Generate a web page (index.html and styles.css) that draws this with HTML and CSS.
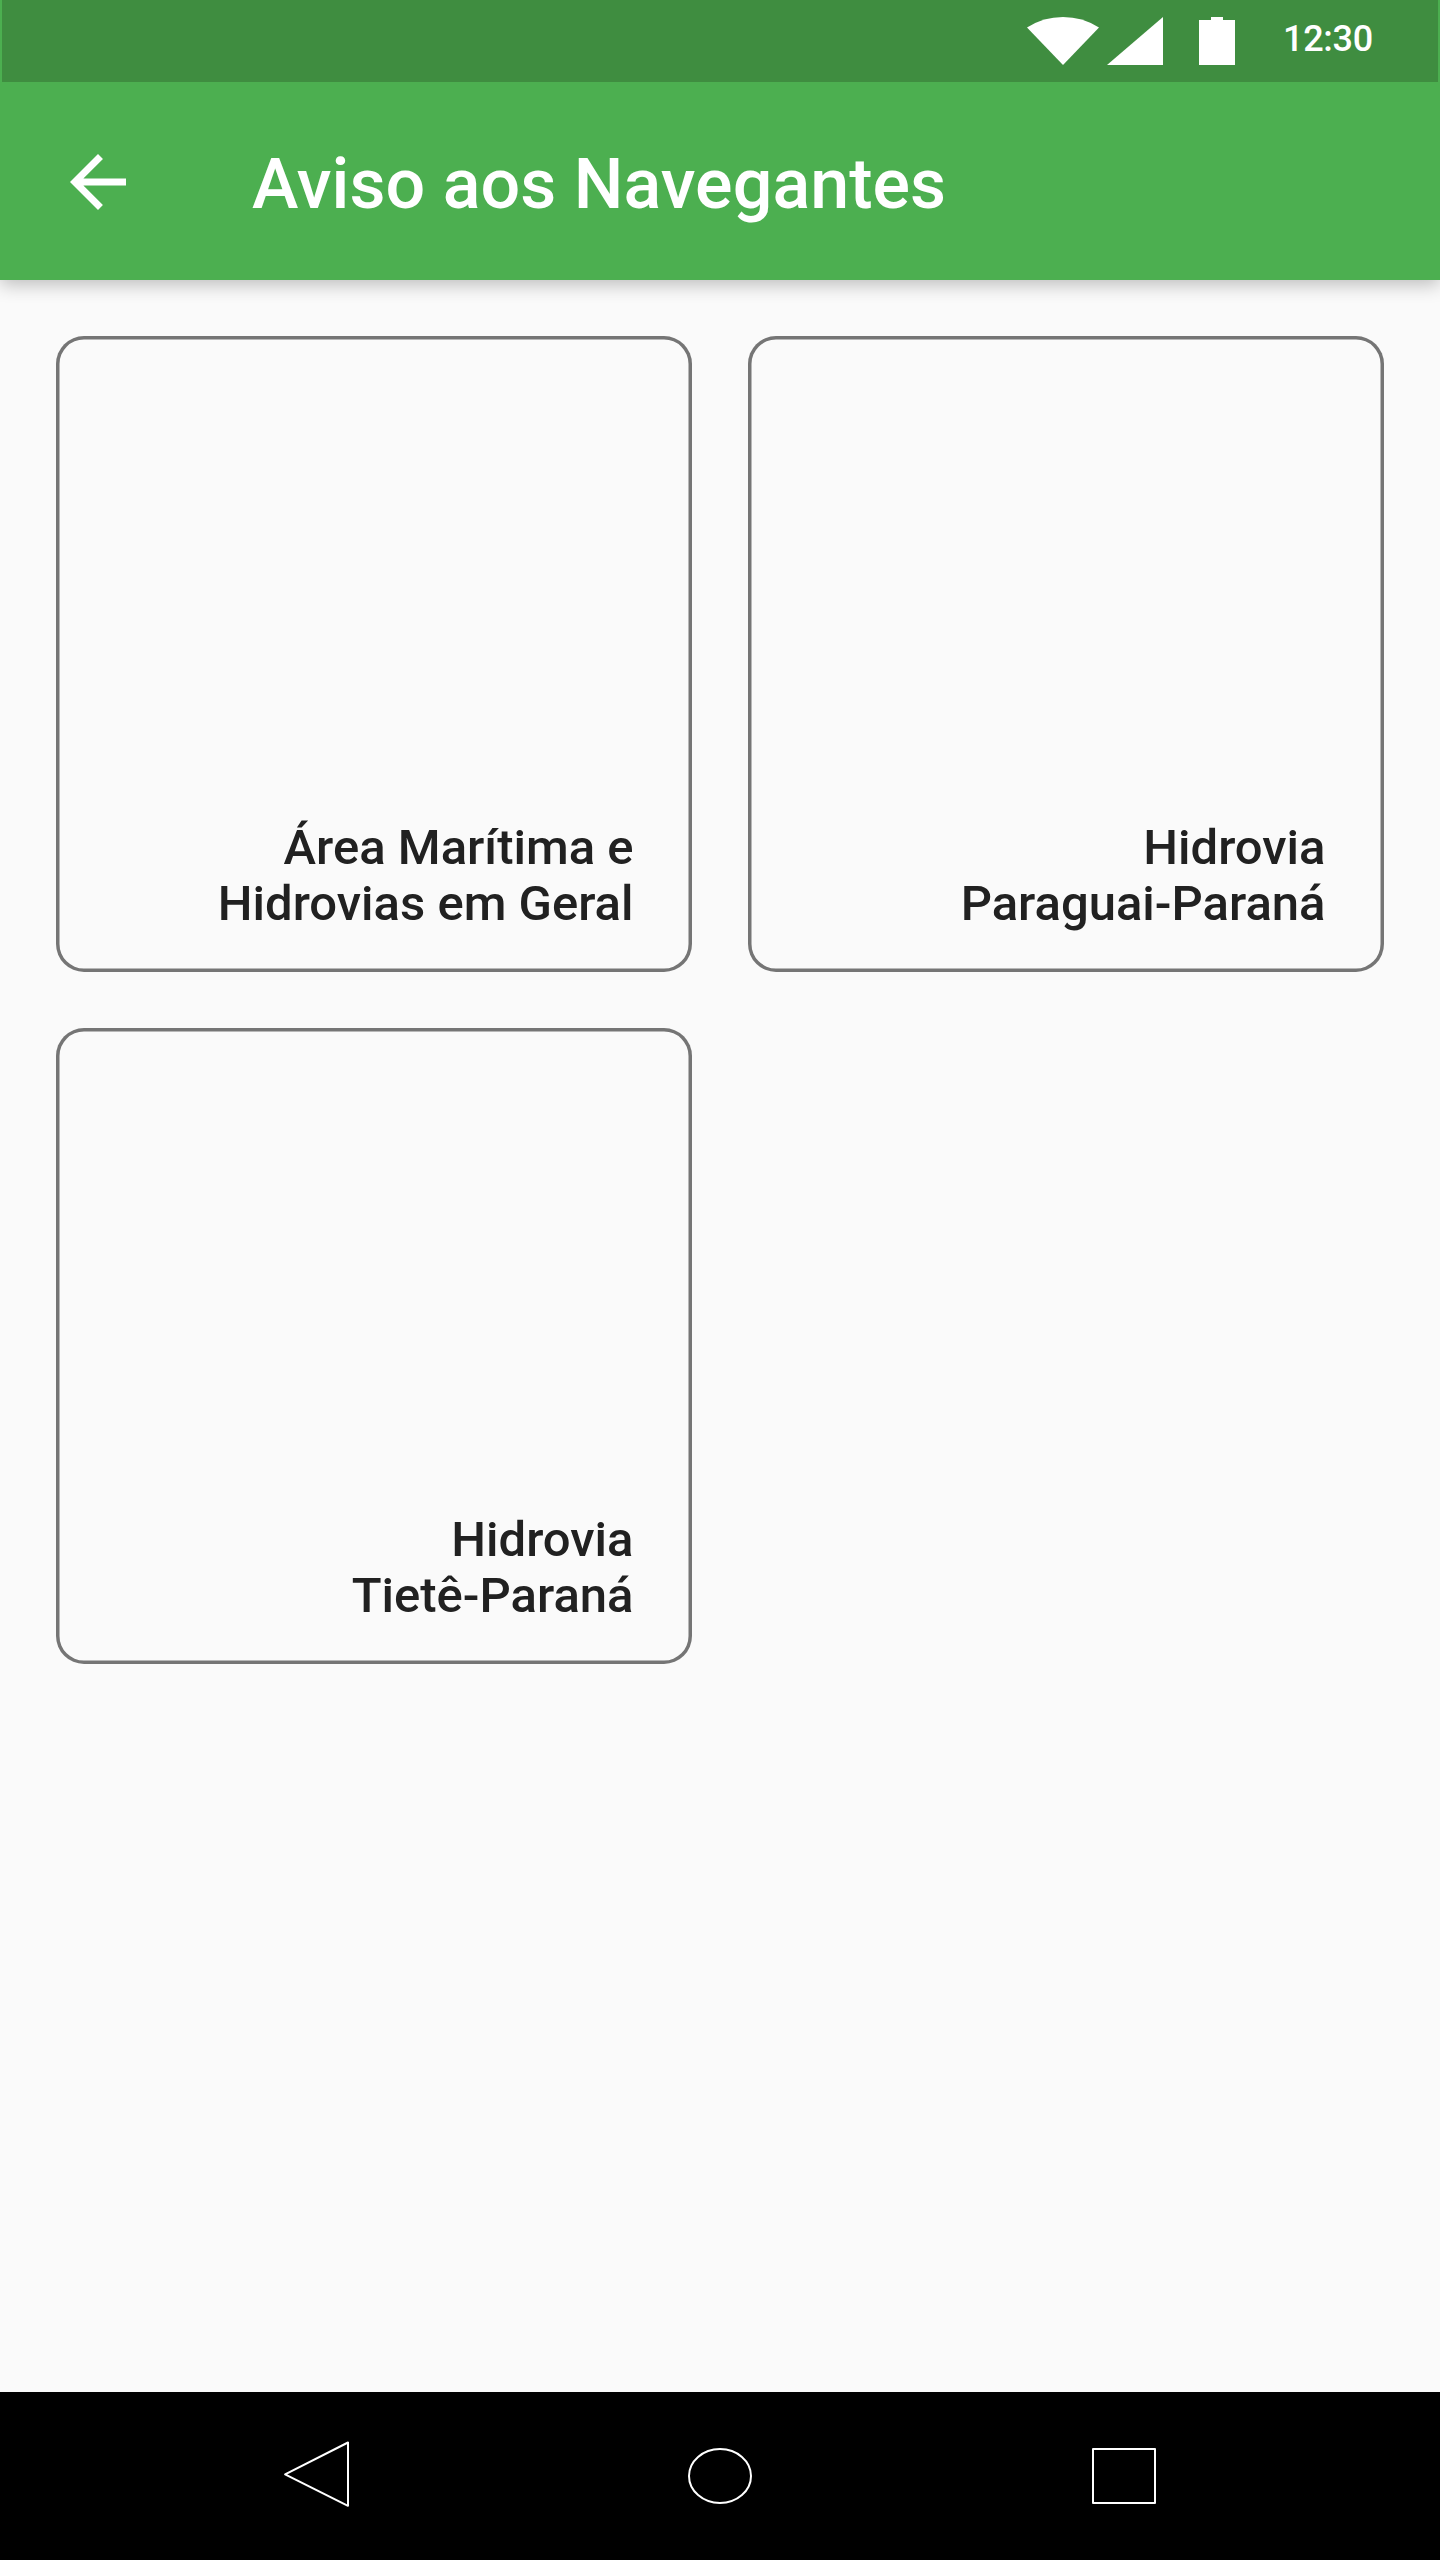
FILE: index.html
```html
<!DOCTYPE html>
<html lang="pt-BR">
<head>
<meta charset="utf-8">
<title>Aviso aos Navegantes</title>
<link rel="stylesheet" href="styles.css">
</head>
<body>
<div class="screen">
  <header class="top">
    <div class="status-bar">
      <svg class="status-icons" viewBox="0 0 208 48" aria-hidden="true">
        <path d="M0 10.5A67 67 0 0 1 72 10.5L36 48z"/>
        <path d="M80 48h56V0z"/>
        <path d="M172 3h12V0h12v3h12v45h-36z"/>
      </svg>
      <span class="clock">12:30</span>
    </div>
    <div class="app-bar">
      <svg class="back" viewBox="0 0 24 24" aria-label="Voltar"><path d="M20 11H7.83l5.59-5.59L12 4l-8 8 8 8 1.41-1.41L7.83 13H20v-2z"/></svg>
      <h1 class="title">Aviso aos Navegantes</h1>
    </div>
  </header>
  <main class="grid">
    <a class="card"><span class="label">Área Marítima e<br>Hidrovias em Geral</span></a>
    <a class="card"><span class="label">Hidrovia<br>Paraguai-Paraná</span></a>
    <a class="card"><span class="label">Hidrovia<br>Tietê-Paraná</span></a>
  </main>
  <nav class="nav-bar">
    <svg class="nav-icon nav-back" viewBox="0 0 66 68"><path d="M2.1 34.4L65 2.5v63.3z"/></svg>
    <svg class="nav-icon nav-home" viewBox="0 0 64 56"><ellipse cx="32" cy="28" rx="31" ry="27"/></svg>
    <svg class="nav-icon nav-recent" viewBox="0 0 64 56"><rect x="1" y="1" width="62" height="54"/></svg>
  </nav>
</div>
</body>
</html>
```
FILE: styles.css
```css
* {
  box-sizing: border-box;
}

body {
  margin: 0;
  background: #fafafa;
  font-family: Roboto, "Liberation Sans", sans-serif;
  font-weight: 500;
}

.screen {
  display: flex;
  flex-direction: column;
  width: 1440px;
  height: 2560px;
}

.top {
  height: 280px;
  background: #4caf50;
  box-shadow: 0 5px 17px rgba(0, 0, 0, 0.24);
}

.status-bar {
  display: flex;
  justify-content: flex-end;
  height: 82px;
  margin: 0 2px;
  padding: 17px 65px 0 0;
  background: #3f8d40;
  color: #fff;
}

.status-icons {
  width: 208px;
  height: 48px;
  margin-right: 48px;
  fill: #fff;
}

.clock {
  width: 90px;
  height: 42px;
  margin-top: 1px;
  font-size: 36px;
  letter-spacing: -0.3px;
  line-height: 42px;
}

.app-bar {
  display: flex;
  align-items: center;
  height: 198px;
  padding-left: 56px;
}

.back {
  width: 84px;
  height: 84px;
  margin-top: 1px;
  fill: #fff;
}

.title {
  margin: 6px 0 0 112px;
  color: #fff;
  font-size: 70px;
  font-weight: 500;
  letter-spacing: 0.05px;
  line-height: 84px;
}

.grid {
  display: grid;
  flex: 1;
  grid-template-columns: 636px 636px;
  grid-auto-rows: 636px;
  gap: 56px;
  padding: 56px;
}

.card {
  display: flex;
  align-items: flex-end;
  justify-content: flex-end;
  padding: 0 58.5px 40px;
  border-radius: 28px;
  box-shadow: inset 0 0 0 3.5px #757575;
}

.label {
  color: #212121;
  font-size: 49px;
  line-height: 56px;
  text-align: right;
}

.nav-bar {
  display: flex;
  height: 168px;
  padding-left: 283px;
  background: #000;
}

.nav-icon {
  fill: none;
  stroke: #fff;
  stroke-width: 2;
  stroke-linejoin: round;
}

.nav-back {
  width: 66px;
  height: 68px;
  margin-top: 48px;
}

.nav-home {
  width: 64px;
  height: 56px;
  margin: 56px 340px 0 339px;
}

.nav-recent {
  width: 64px;
  height: 56px;
  margin-top: 56px;
}
```
